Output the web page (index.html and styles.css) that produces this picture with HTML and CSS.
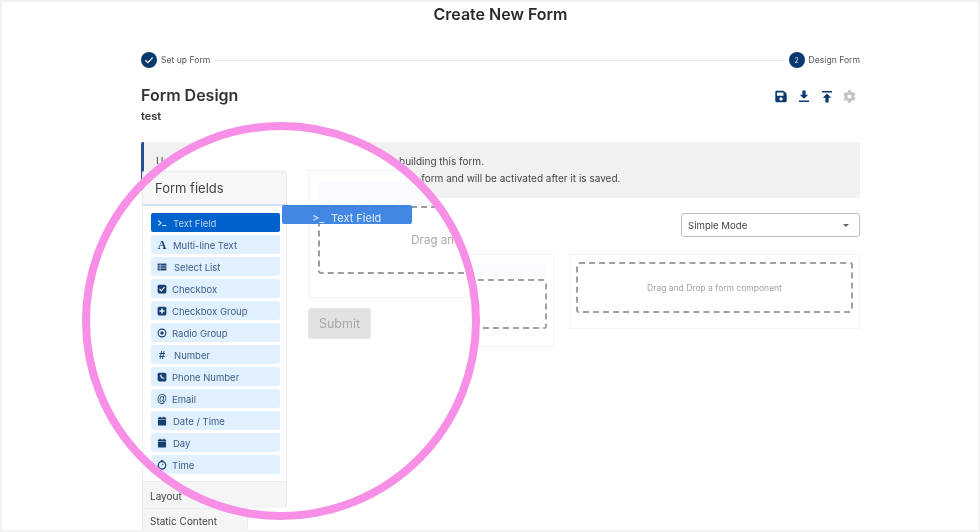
FILE: index.html
```html
<!DOCTYPE html>
<html lang="en">
<head>
<meta charset="utf-8">
<title>Create New Form</title>
<link rel="stylesheet" href="styles.css">
</head>
<body>
<div class="frame">
  <h1 class="page-title">Create New Form</h1>

  <div class="stepper">
    <span class="step-dot"><svg viewBox="0 0 16 16" width="16" height="16"><path d="M4.4 8.3l2.4 2.3 4.8-5" fill="none" stroke="#fff" stroke-width="1.3"/></svg></span>
    <span class="step-label">Set up Form</span>
    <span class="step-line"></span>
    <span class="step-dot">2</span>
    <span class="step-label">Design Form</span>
  </div>

  <div class="heading-row">
    <h2 class="form-heading">Form Design</h2>
    <div class="tools">
      <svg class="tool" viewBox="0 0 448 512"><path d="M433.941 129.941l-83.882-83.882A48 48 0 0 0 316.118 32H48C21.49 32 0 53.49 0 80v352c0 26.51 21.49 48 48 48h352c26.51 0 48-21.49 48-48V163.882a48 48 0 0 0-14.059-33.941zM224 416c-35.346 0-64-28.654-64-64 0-35.346 28.654-64 64-64s64 28.654 64 64c0 35.346-28.654 64-64 64zm96-304.52V212c0 6.627-5.373 12-12 12H76c-6.627 0-12-5.373-12-12V108c0-6.627 5.373-12 12-12h228.52c3.183 0 6.235 1.264 8.485 3.515l3.48 3.48A11.996 11.996 0 0 1 320 111.48z"/></svg>
      <svg class="tool" viewBox="0 0 12 12"><path d="M4.4 0h3.2v4.2h2.6L6 8.3 1.8 4.2h2.6zM1 10h10v1.4H1z"/></svg>
      <svg class="tool" viewBox="0 0 12 12"><path d="M1 .6h10V2H1zM6 3l4.2 4.2H7.6V12H4.4V7.2H1.8z"/></svg>
      <svg class="tool tool-muted" viewBox="0 0 512 512"><path d="M487.4 315.7l-42.6-24.6c4.3-23.2 4.3-47 0-70.2l42.6-24.6c4.9-2.8 7.1-8.6 5.5-14-11.1-35.6-30-67.8-54.7-94.6-3.8-4.1-10-5.1-14.8-2.3L380.8 110c-17.9-15.4-38.5-27.3-60.8-35.1V25.8c0-5.6-3.9-10.5-9.4-11.7-36.7-8.2-74.3-7.8-109.2 0-5.5 1.2-9.4 6.1-9.4 11.7V75c-22.2 7.9-42.8 19.8-60.8 35.1L88.7 85.5c-4.9-2.8-11-1.9-14.8 2.3-24.7 26.7-43.6 58.9-54.7 94.6-1.7 5.4.6 11.2 5.5 14L67.3 221c-4.3 23.2-4.3 47 0 70.2l-42.6 24.6c-4.9 2.8-7.1 8.6-5.5 14 11.1 35.6 30 67.8 54.7 94.6 3.8 4.1 10 5.1 14.8 2.3l42.6-24.6c17.9 15.4 38.5 27.3 60.8 35.1v49.2c0 5.6 3.9 10.5 9.4 11.7 36.7 8.2 74.3 7.8 109.2 0 5.5-1.2 9.4-6.1 9.4-11.7v-49.2c22.2-7.9 42.8-19.8 60.8-35.1l42.6 24.6c4.9 2.8 11 1.9 14.8-2.3 24.7-26.7 43.6-58.9 54.7-94.6 1.5-5.5-.7-11.3-5.6-14.1zM256 336c-44.1 0-80-35.9-80-80s35.9-80 80-80 80 35.9 80 80-35.9 80-80 80z"/></svg>
    </div>
  </div>
  <p class="form-name">test</p>

  <div class="notice">
    <p>Use the form fields from the panel on the left when building this form.</p>
    <p>Fields can be moved from the panel to the layout of this form and will be activated after it is saved.</p>
  </div>

  <div class="mode-row">
    <div class="mode-select"><span>Simple Mode</span><span class="caret"></span></div>
  </div>

  <div class="columns">
    <div class="sidebar-gap"></div>
    <div class="card card-left">
      <div class="card-head"></div>
      <div class="dropzone dropzone-left"></div>
    </div>
    <div class="card card-right">
      <div class="dropzone dropzone-right">Drag and Drop a form component</div>
    </div>
  </div>

  <div class="lens">
    <div class="lens-form">
      <div class="lens-card">
        <div class="lens-head"></div>
        <div class="lens-drop">Drag and Drop a form component</div>
      </div>
      <div class="submit">Submit</div>
    </div>
  </div>

  <aside class="palette">
    <div class="palette-title">Form fields</div>
    <ul class="field-list">
      <li class="field field-active"><svg class="ico" viewBox="0 0 16 16"><path d="M2 4l4.5 4L2 12" fill="none" stroke="currentColor" stroke-width="1.7"/><path d="M8 12h7" stroke="currentColor" stroke-width="1.7"/></svg><span class="field-text">Text Field</span></li>
      <li class="field"><span class="ico ico-serif">A</span><span class="field-text">Multi-line Text</span></li>
      <li class="field"><svg class="ico" viewBox="0 0 16 16"><path d="M1 2.5h14v11H1z" fill="currentColor"/><path d="M1 6.200h14M1 9.800h14M5 2.500v11" stroke="#e1f0ff" stroke-width="1"/></svg><span class="field-text shift-1">Select List</span></li>
      <li class="field"><svg class="ico" viewBox="0 0 16 16"><rect x="1" y="1" width="14" height="14" rx="2.5" fill="currentColor"/><path d="M4 8l3 3 5-6" fill="none" stroke="#e1f0ff" stroke-width="1.9"/></svg><span class="field-text shift-m1">Checkbox</span></li>
      <li class="field"><svg class="ico" viewBox="0 0 16 16"><rect x="1" y="1" width="14" height="14" rx="2.5" fill="currentColor"/><path d="M8 4v8M4 8h8" stroke="#e1f0ff" stroke-width="2.4"/></svg><span class="field-text shift-m1">Checkbox Group</span></li>
      <li class="field"><svg class="ico" viewBox="0 0 16 16"><circle cx="8" cy="8" r="6.2" fill="none" stroke="currentColor" stroke-width="1.8"/><circle cx="8" cy="8" r="2.8" fill="currentColor"/></svg><span class="field-text shift-m1">Radio Group</span></li>
      <li class="field"><span class="ico ico-hash">#</span><span class="field-text shift-1">Number</span></li>
      <li class="field"><svg class="ico" viewBox="0 0 16 16"><rect x="1" y="1" width="14" height="14" rx="2.5" fill="currentColor"/><path d="M5.2 4.2c-.8 3.6 2.8 7.4 6.6 6.6l-.3-2-2 .2-2.4-2.6.2-2z" fill="#e1f0ff"/></svg><span class="field-text shift-m1">Phone Number</span></li>
      <li class="field"><span class="ico ico-at">@</span><span class="field-text shift-m1">Email</span></li>
      <li class="field"><svg class="ico" viewBox="0 0 16 16"><path d="M1.5 6h13v8a1 1 0 0 1-1 1h-11a1 1 0 0 1-1-1zM1.5 5V3.5a1 1 0 0 1 1-1H4V1h2v1.500h4V1h2v1.500h1.500a1 1 0 0 1 1 1V5z" fill="currentColor"/></svg><span class="field-text">Date / Time</span></li>
      <li class="field"><svg class="ico" viewBox="0 0 16 16"><path d="M1.500 6h13v8a1 1 0 0 1-1 1h-11a1 1 0 0 1-1-1zM1.500 5V3.500a1 1 0 0 1 1-1H4V1h2v1.500h4V1h2v1.500h1.500a1 1 0 0 1 1 1V5z" fill="currentColor"/></svg><span class="field-text">Day</span></li>
      <li class="field"><svg class="ico" viewBox="0 0 16 16"><circle cx="8" cy="8.500" r="6" fill="none" stroke="currentColor" stroke-width="2"/><path d="M8 8.500l2.500-2.500M6 1h4" stroke="currentColor" stroke-width="1.500"/></svg><span class="field-text shift-m1">Time</span></li>
    </ul>
    <div class="palette-section">Layout</div>
    <div class="palette-section palette-section-short">Static Content</div>
  </aside>

  <div class="ghost"><span class="ghost-prompt">&gt;_</span><span>Text Field</span></div>

  <div class="ring"></div>
</div>
</body>
</html>
```
FILE: styles.css
```css
* { box-sizing: border-box; }
html, body { margin: 0; padding: 0; background: #fff; }
body { font-family: Inter, "Liberation Sans", sans-serif; color: #333; }
p, h1, h2, ul { margin: 0; padding: 0; }

.frame {
  position: relative;
  width: 980px;
  height: 532px;
  overflow: hidden;
  border: 2px solid #f2f2f2;
  padding: 0 118px 0 139px;
  background: #fff;
}
.frame > :not(.ring) { filter: blur(.35px); }

.page-title {
  height: 24px;
  line-height: 24px;
  font-size: 16px;
  font-weight: 600;
  text-align: center;
  color: #2b2b2b;
}

.stepper {
  display: flex;
  align-items: center;
  height: 16px;
  margin-top: 26px;
}
.step-dot {
  display: flex;
  align-items: center;
  justify-content: center;
  width: 16px;
  height: 16px;
  border-radius: 50%;
  background: #0b3a70;
  color: #d5deea;
  font-size: 7px;
}
.step-label { margin-left: 4px; font-size: 8.6px; color: #555; }
.step-line { flex: 1; height: 1px; margin: 0 5px; background: #e9e9e9; }

.heading-row {
  display: flex;
  justify-content: space-between;
  align-items: center;
  height: 20px;
  margin-top: 17px;
}
.form-heading { font-size: 16px; font-weight: 600; color: #333; }
.tools { display: flex; align-items: center; gap: 11px; padding: 2px 4px 0 0; }
.tool { width: 12px; height: 13px; fill: #0b3a70; }
.tool-muted { fill: #c4c4c4; width: 13px; margin-left: -1px; }
.form-name {
  height: 14px;
  line-height: 14px;
  margin-top: 4px;
  font-size: 11px;
  font-weight: 600;
  color: #333;
}

.notice {
  height: 56px;
  margin-top: 19px;
  padding: 11px 12px;
  background: #f1f1f1;
  border-left: 3px solid #2d4f8e;
  border-radius: 2px;
  font-size: 10px;
  line-height: 17px;
  color: #444;
}

.mode-row { display: flex; justify-content: flex-end; margin-top: 15px; }
.mode-select {
  display: flex;
  justify-content: space-between;
  align-items: center;
  width: 179px;
  height: 24px;
  padding: 1px 6px 0;
  border: 1px solid #bdbdbd;
  border-radius: 3px;
  font-size: 9.6px;
  color: #444;
}
.caret {
  width: 0;
  height: 0;
  margin-right: 4px;
  border-left: 3px solid transparent;
  border-right: 3px solid transparent;
  border-top: 3px solid #666;
}

.columns { display: flex; align-items: flex-start; margin-top: 17px; }
.sidebar-gap { width: 167px; flex: none; }
.card { border: 1px dotted #e8e8e8; padding: 7px 6px 7px 5px; flex: none; }
.card-left { width: 246px; height: 93px; margin-right: 16px; }
.card-right { width: 290px; height: 75px; }
.card-head { height: 17px; background: #fafbff; }
.dropzone {
  border: 2px dashed #a0a0a0;
  border-radius: 3px;
  display: flex;
  align-items: center;
  justify-content: center;
  font-size: 8.5px;
  color: #a3a3a3;
}
.dropzone-left { height: 50px; }
.dropzone-right { height: 51px; }

/* magnifier overlay */
.lens {
  position: absolute;
  left: 80px;
  top: 120px;
  width: 398px;
  height: 398px;
  border-radius: 50%;
  overflow: hidden;
  background: #fff;
}
.lens-form { position: absolute; left: 226px; top: 48px; width: 390px; }
.lens-card {
  height: 128px;
  padding: 10px 10px 10px 9px;
  border: 1px dotted #e6e6e6;
}
.lens-head { height: 25px; background: #fafbff; }
.lens-drop {
  height: 68px;
  border: 2px dashed #9c9c9c;
  border-radius: 3px;
  display: flex;
  align-items: center;
  justify-content: center;
  font-size: 11.5px;
  color: #aaa;
}
.submit {
  width: 63px;
  height: 31px;
  margin-top: 10px;
  display: flex;
  align-items: center;
  justify-content: center;
  background: #e2e2e2;
  border: 1px solid #e6e6e6;
  border-radius: 3px;
  font-size: 12.5px;
  color: #a9a9a9;
}

.palette {
  position: absolute;
  left: 140px;
  top: 169px;
  width: 145px;
  font-size: 10px;
}
.palette-title {
  height: 35px;
  padding: 8px 12px 0;
  background: rgba(246, 246, 246, .9);
  border: 1px solid #ececec;
  border-bottom: 2px solid #cfe2f7;
  border-radius: 2px 2px 0 0;
  font-size: 13px;
  line-height: 17px;
  color: #444;
}
.field-list {
  display: flex;
  flex-direction: column;
  gap: 3px;
  height: 275px;
  padding: 7px 6px 0 8px;
  list-style: none;
  background: #fff;
  border-left: 1px solid #f0f0f0;
  border-right: 1px solid #f0f0f0;
}
.field {
  display: flex;
  align-items: center;
  height: 19px;
  flex: none;
  padding: 1px 0 0 6px;
  background: #e1f0ff;
  border-radius: 2px;
  color: #17406f;
  font-size: 9.5px;
}
.field-active { background: #0062cc; color: #cfe1f7; }
.ico {
  display: block;
  width: 10px;
  height: 10px;
  flex: none;
  text-align: center;
  font-size: 10px;
  line-height: 10px;
}
.ico-serif { font-family: "Liberation Serif", serif; font-weight: 700; font-size: 12px; }
.ico-hash { font-family: "Liberation Sans", sans-serif; font-weight: 700; font-size: 11px; }
.ico-at { font-family: "Liberation Sans", sans-serif; font-weight: 700; font-size: 10px; }
.field-text { margin-left: 6px; color: #3c5c88; }
.field-active .field-text { color: #bcd3f0; }
.shift-1 { margin-left: 7px; }
.shift-m1 { margin-left: 5px; }
.palette-section {
  height: 27px;
  padding: 2px 7px 0;
  display: flex;
  align-items: center;
  background: #f5f5f5;
  border: 1px solid #ececec;
  border-bottom: 0;
  color: #444;
  font-size: 10px;
}
.palette-section-short { width: 106px; height: 22px; }

.ghost {
  position: absolute;
  left: 280px;
  top: 203px;
  width: 130px;
  height: 19px;
  display: flex;
  align-items: center;
  padding: 7px 0 0 30px;
  background: rgba(58, 130, 226, .96);
  border-radius: 2px;
  color: #e4eefb;
  font-size: 11px;
}
.ghost-prompt { width: 19px; }

.ring {
  position: absolute;
  left: 80px;
  top: 120px;
  width: 398px;
  height: 398px;
  border: 8px solid #f68fe5;
  border-radius: 50%;
  pointer-events: none;
}
```
